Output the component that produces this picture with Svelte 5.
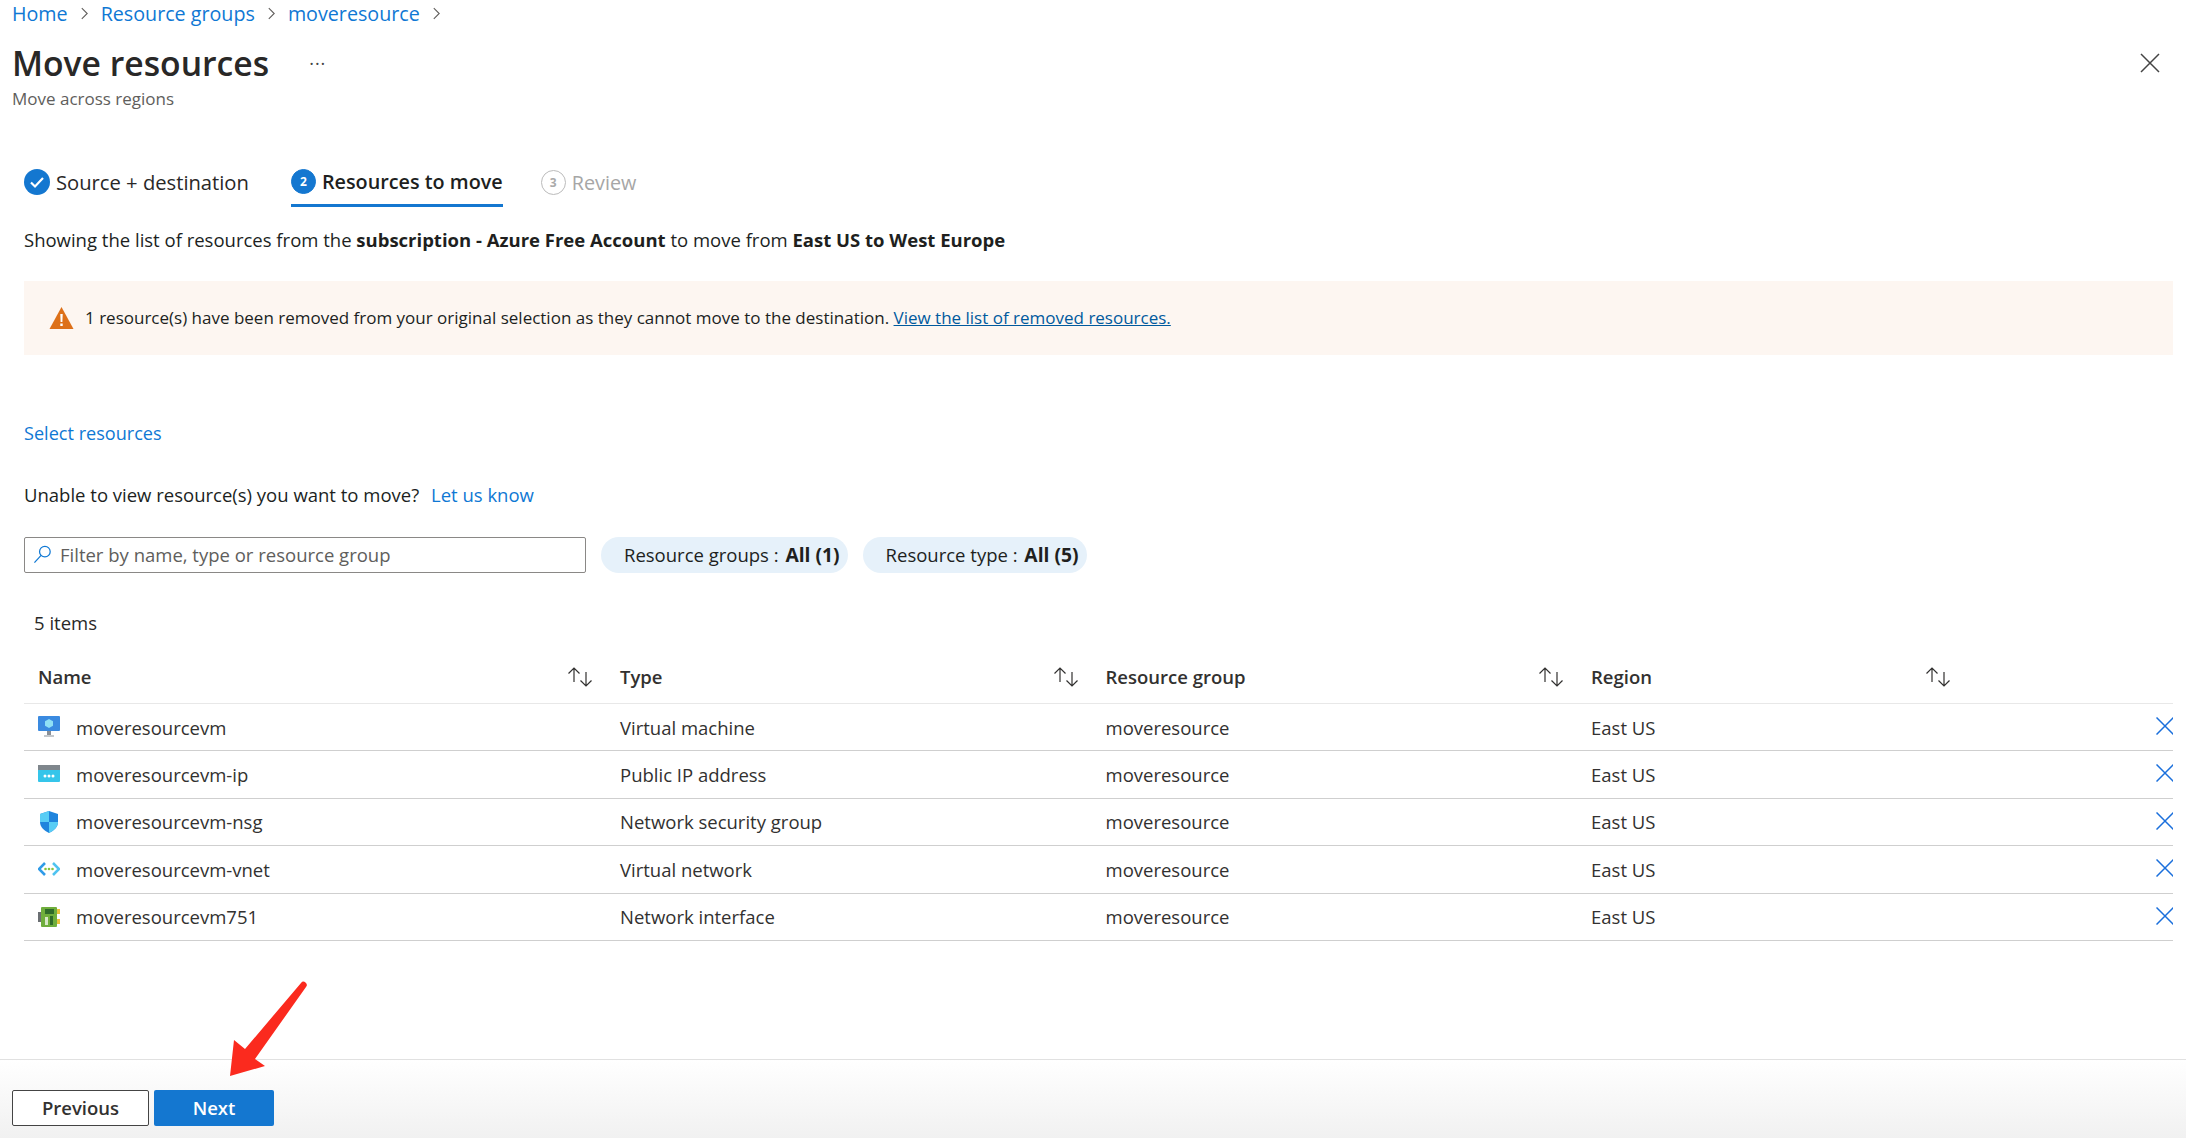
<script>
  const rows = [
    { name: 'moveresourcevm', type: 'Virtual machine', icon: 'vm' },
    { name: 'moveresourcevm-ip', type: 'Public IP address', icon: 'ip' },
    { name: 'moveresourcevm-nsg', type: 'Network security group', icon: 'nsg' },
    { name: 'moveresourcevm-vnet', type: 'Virtual network', icon: 'vnet' },
    { name: 'moveresourcevm751', type: 'Network interface', icon: 'nic' }
  ];
  const columns = ['Name', 'Type', 'Resource group', 'Region'];
</script>

<div class="page">
  <nav class="crumbs">
    <a href="#home">Home</a>
    <svg class="chev" viewBox="0 0 10 16"><path d="M2 2l6 6-6 6" /></svg>
    <a href="#groups">Resource groups</a>
    <svg class="chev" viewBox="0 0 10 16"><path d="M2 2l6 6-6 6" /></svg>
    <a href="#rg">moveresource</a>
    <svg class="chev" viewBox="0 0 10 16"><path d="M2 2l6 6-6 6" /></svg>
  </nav>

  <header class="head">
    <div>
      <div class="title-row">
        <h1>Move resources</h1>
        <span class="more">···</span>
      </div>
      <div class="sub">Move across regions</div>
    </div>
    <svg class="close" viewBox="0 0 20 20"><path d="M1 1l18 18M19 1L1 19" /></svg>
  </header>

  <main class="content">
    <div class="tabs">
      <div class="tab">
        <svg class="step" viewBox="0 0 26 26">
          <circle cx="13" cy="13" r="13" fill="#1477d0" />
          <path d="M7 13.500l4 4 8-8.500" fill="none" stroke="#fff" stroke-width="2.200" />
        </svg>
        Source + destination
      </div>
      <div class="tab active">
        <span class="num on">2</span>
        Resources to move
      </div>
      <div class="tab off">
        <span class="num">3</span>
        Review
      </div>
    </div>

    <p class="desc">Showing the list of resources from the <b>subscription - Azure Free Account</b> to move from <b>East US to West Europe</b></p>

    <div class="banner">
      <svg class="warn" viewBox="0 0 24 22">
        <path d="M12 0L24 22H0z" fill="#dd7019" />
        <path d="M10.800 7h2.400l-.3 8h-1.800zM10.800 16.500h2.400v2.400h-2.400z" fill="#fff" />
      </svg>
      <span>1 resource(s) have been removed from your original selection as they cannot move to the destination. <a href="#removed">View the list of removed resources.</a></span>
    </div>

    <a class="select" href="#select">Select resources</a>

    <p class="unable">Unable to view resource(s) you want to move? <a href="#know">Let us know</a></p>

    <div class="filters">
      <div class="search">
        <svg viewBox="0 0 20 20"><circle cx="12.500" cy="7" r="5.600" /><path d="M8.500 11L1.500 18.500" /></svg>
        <span>Filter by name, type or resource group</span>
      </div>
      <div class="pill"><span>Resource groups : <b>All (1)</b></span></div>
      <div class="pill"><span>Resource type : <b>All (5)</b></span></div>
    </div>

    <div class="count">5 items</div>

    <div class="table">
      <div class="row header">
        {#each columns as col}
          <div class="cell">
            <span>{col}</span>
            <svg class="sort" viewBox="0 0 26 20"><path d="M7 15V1M1.500 6.500L7 1l5.500 5.500M19 5v14M13.500 13.500L19 19l5.500-5.500" /></svg>
          </div>
        {/each}
      </div>
      {#each rows as row}
        <div class="row">
          <div class="cell name">
            <svg class="ricon" viewBox="0 0 22 22">
              {#if row.icon === 'vm'}
                <rect x="0" y="0" width="22" height="15" rx="1" fill="#3a8ae0" />
                <path d="M11 3l4 2.200v4.600L11 12l-4-2.200V5.200z" fill="#8fe0f5" />
                <rect x="9" y="15" width="4" height="4" fill="#8a8f96" />
                <rect x="6" y="19" width="10" height="2" fill="#c4c8cc" />
              {:else if row.icon === 'ip'}
                <rect x="0" y="1" width="22" height="17" rx="1" fill="#35c5ea" />
                <rect x="0" y="1" width="22" height="5" fill="#7f868c" />
                <circle cx="7" cy="12" r="1.500" fill="#fff" />
                <circle cx="11" cy="12" r="1.500" fill="#fff" />
                <circle cx="15" cy="12" r="1.500" fill="#fff" />
              {:else if row.icon === 'nsg'}
                <path d="M11 0l9 3v8c0 5-4 8.500-9 11C6 19.500 2 16 2 11V3z" fill="#1f84dd" />
                <path d="M11 0v11H2V3zM11 11h9c0 5-4 8.500-9 11z" fill="#58cdf5" />
              {:else if row.icon === 'vnet'}
                <path d="M7 5l-6 6 6 6" fill="none" stroke="#2f9be8" stroke-width="2.600" />
                <path d="M15 5l6 6-6 6" fill="none" stroke="#4fc3f0" stroke-width="2.600" />
                <circle cx="7.500" cy="11" r="1.300" fill="#86c440" />
                <circle cx="11" cy="11" r="1.300" fill="#86c440" />
                <circle cx="14.500" cy="11" r="1.300" fill="#86c440" />
              {:else}
                <rect x="0" y="6" width="3" height="10" fill="#6b6f73" />
                <rect x="3" y="1" width="16" height="20" rx="1" fill="#6fae3c" />
                <rect x="19" y="3" width="3" height="5" fill="#e8c23c" />
                <rect x="19" y="13" width="3" height="5" fill="#e8c23c" />
                <rect x="7" y="3" width="9" height="5" fill="#2f6b2a" />
                <rect x="7" y="11" width="3" height="8" fill="#d8e8c8" />
                <rect x="12" y="10" width="3" height="9" fill="#2f6b2a" />
              {/if}
            </svg>
            <span>{row.name}</span>
          </div>
          <div class="cell">{row.type}</div>
          <div class="cell">moveresource</div>
          <div class="cell">East US</div>
          <svg class="remove" viewBox="0 0 17 18"><path d="M0.500 0.500l17 17M17.500 0.500l-17 17" /></svg>
        </div>
      {/each}
    </div>
  </main>

  <footer class="foot">
    <button class="prev" type="button">Previous</button>
    <button class="next" type="button">Next</button>
  </footer>

  <!-- annotation drawn over the screenshot -->
  <svg class="arrow" viewBox="0 0 100 110">
    <path d="M81 3a3.200 3.200 0 0 1 5 4L35 79l10 7L10 96l4-36 11 9z" fill="#fb2a1e" />
  </svg>
</div>

<style>
  :global(body) {
    margin: 0;
    background: #fff;
  }
  .page {
    position: relative;
    height: 1138px;
    display: flex;
    flex-direction: column;
    overflow: hidden;
    font-family: "Open Sans", "Noto Sans", sans-serif;
    font-size: 18.500px;
    color: #292827;
  }
  a {
    color: #0f78d4;
    text-decoration: none;
  }
  .crumbs {
    display: flex;
    align-items: center;
    gap: 12px;
    height: 26px;
    padding-left: 12px;
    font-size: 19.700px;
  }
  .chev {
    width: 9px;
    height: 15px;
    fill: none;
    stroke: #605e5c;
    stroke-width: 1.200;
  }
  .head {
    display: flex;
    justify-content: space-between;
    padding: 14px 26px 0 12px;
  }
  .title-row {
    display: flex;
    align-items: center;
    gap: 40px;
    height: 46px;
  }
  h1 {
    margin: 0;
    font-size: 33.700px;
    font-weight: 600;
    color: #292827;
  }
  .more {
    font-size: 18px;
    color: #444;
    letter-spacing: 1px;
  }
  .sub {
    margin-top: 1px;
    font-size: 17px;
    color: #605e5c;
  }
  .close {
    width: 20px;
    height: 20px;
    margin-top: 13px;
    fill: none;
    stroke: #444;
    stroke-width: 1.500;
  }
  .content {
    flex: 1;
    padding: 0 13px 0 24px;
  }
  .tabs {
    display: flex;
    gap: 42px;
    margin-top: 47px;
    height: 50px;
  }
  .tab {
    display: flex;
    align-items: center;
    gap: 6px;
    height: 50px;
    box-sizing: border-box;
    font-size: 20.200px;
  }
  .tab.active {
    padding-top: 2px;
    border-bottom: 3px solid #1477d0;
    font-size: 19.800px;
    font-weight: 600;
    color: #201f1e;
  }
  .tab.off {
    color: #a6a6a6;
    margin-left: -4px;
    font-size: 19.800px;
  }
  .step {
    width: 26px;
    height: 26px;
  }
  .num {
    width: 23px;
    height: 23px;
    border: 1.500px solid #bbb;
    border-radius: 50%;
    display: flex;
    align-items: center;
    justify-content: center;
    font-size: 12px;
    font-weight: 700;
    color: #aaa;
  }
  .num.on {
    border-color: #1477d0;
    background: #1477d0;
    color: #fff;
  }
  .desc {
    margin: 20px 0 0;
    line-height: 26px;
    color: #201f1e;
  }
  b {
    font-weight: 700;
  }
  .banner {
    display: flex;
    align-items: center;
    gap: 11px;
    height: 74px;
    margin-top: 28px;
    padding-left: 25px;
    padding-bottom: 1px;
    box-sizing: border-box;
    background: #fdf6f1;
    font-size: 17px;
    color: #201f1e;
  }
  .banner a {
    color: #005a9e;
    text-decoration: underline;
  }
  .warn {
    width: 25px;
    height: 22px;
  }
  .select {
    display: block;
    margin-top: 65px;
    line-height: 26px;
    font-size: 18.100px;
  }
  .unable {
    margin: 36px 0 0;
    line-height: 26px;
    color: #201f1e;
  }
  .unable a {
    margin-left: 7px;
  }
  .filters {
    display: flex;
    gap: 15px;
    margin-top: 29px;
  }
  .search {
    display: flex;
    align-items: center;
    gap: 8px;
    width: 562px;
    height: 36px;
    padding-left: 8px;
    padding-bottom: 1px;
    box-sizing: border-box;
    border: 1px solid #8a8886;
    border-radius: 2px;
    color: #605e5c;
  }
  .search svg {
    width: 19px;
    height: 19px;
    fill: none;
    stroke: #0f78d4;
    stroke-width: 1.300;
  }
  .pill {
    display: flex;
    align-items: center;
    height: 36px;
    padding: 0 8px 1px 23px;
    box-sizing: border-box;
    border-radius: 18px;
    background: #e6f1fa;
    color: #201f1e;
  }
  .pill b {
    margin-left: 2px;
    font-size: 19.300px;
  }
  .count {
    margin-top: 37px;
    padding-left: 10px;
    line-height: 26px;
  }
  .table {
    margin-top: 14px;
  }
  .row {
    position: relative;
    display: grid;
    grid-template-columns: 582px 485.500px 485.500px 387px 1fr;
    height: 47.400px;
    box-sizing: border-box;
    border-bottom: 1.500px solid #cfcfcf;
    align-items: center;
    color: #323130;
  }
  .row.header {
    height: 54px;
    font-weight: 600;
    border-bottom: 1px solid #e8e8e8;
  }
  .cell {
    display: flex;
    align-items: center;
    justify-content: space-between;
    padding: 0 0 0 14px;
  }
  .cell.name {
    justify-content: flex-start;
    gap: 16px;
  }
  .sort {
    width: 26px;
    height: 20px;
    margin-right: 13px;
    fill: none;
    stroke: #323130;
    stroke-width: 1.200;
  }
  .ricon {
    width: 22px;
    height: 22px;
  }
  /* the x is cut by the right edge of the grid in the reference */
  .remove {
    position: absolute;
    right: 0;
    top: 13px;
    width: 17px;
    height: 18px;
    fill: none;
    stroke: #1a6fdc;
    stroke-width: 1.500;
  }
  .foot {
    display: flex;
    gap: 5px;
    height: 79px;
    padding: 30px 0 0 12px;
    box-sizing: border-box;
    border-top: 1px solid #e1e1e1;
    background: linear-gradient(#ffffff, #f1f1f1);
  }
  button {
    height: 36px;
    padding: 0 0 2px;
    border-radius: 2px;
    font-family: inherit;
    font-size: 18.500px;
    font-weight: 600;
  }
  .prev {
    width: 137px;
    background: #fff;
    border: 1.500px solid #444;
    color: #323130;
  }
  .next {
    width: 120px;
    background: #1477d0;
    border: none;
    color: #fff;
  }
  .arrow {
    position: absolute;
    left: 220px;
    top: 980px;
    width: 100px;
    height: 110px;
  }
</style>
